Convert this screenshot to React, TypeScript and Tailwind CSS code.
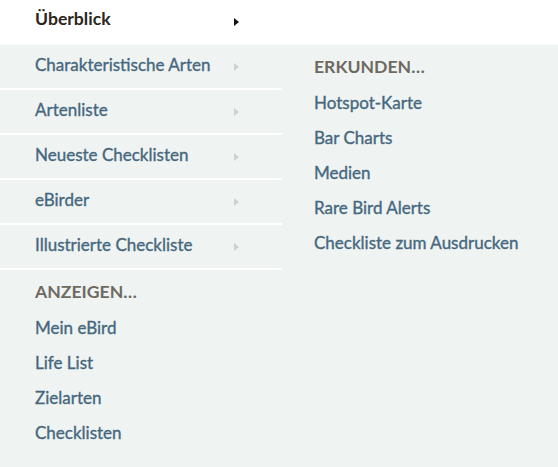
import React from "react";

const rows = [
  "Charakteristische Arten",
  "Artenliste",
  "Neueste Checklisten",
  "eBirder",
  "Illustrierte Checkliste",
];

function Arrow({ dark }: { dark?: boolean }) {
  return (
    <svg width="5" height="8" viewBox="0 0 5 8" className="shrink-0">
      <path d="M0 0 L5 4 L0 8 Z" fill={dark ? "#111111" : "#c9d3d6"} />
    </svg>
  );
}

const link = "text-[#46687e] [-webkit-text-stroke:0.35px_#46687e]";
const head = "h-[35px] flex items-center font-bold text-[17.6px] text-[#6e6a62]";

export default function App() {
  const font = { fontFamily: "Lato, 'Open Sans', sans-serif" };
  return (
    <div className="flex w-[558px] h-[467px] bg-white text-[17px]" style={font}>
      <div className="w-[282px] flex flex-col bg-[#eff3f2]">
        <div className="h-[45px] bg-white flex items-center pl-[35px] pr-[43px] justify-between border-b-2 border-white">
          <span className="font-bold text-[17.6px] text-[#2b2620] -mt-[4px]">Überblick</span>
          <Arrow dark />
        </div>
        {rows.map((r) => (
          <div
            key={r}
            className="h-[45px] flex items-center pl-[35px] pr-[43px] justify-between border-b-2 border-white"
          >
            <span className={`${link} -mt-[4px]`}>{r}</span>
            <Arrow />
          </div>
        ))}
        <div className="flex flex-col pt-[5px] pl-[35px]">
          <div className={head}>ANZEIGEN…</div>
          {["Mein eBird", "Life List", "Zielarten", "Checklisten"].map((t) => (
            <div key={t} className={`h-[35px] flex items-center ${link}`}>
              {t}
            </div>
          ))}
        </div>
      </div>
      <div className="flex-1 flex flex-col">
        <div className="h-[45px] bg-white" />
        <div className="flex-1 bg-[#eff3f2] flex flex-col pt-[5px] pl-[32px]">
          <div className={head}>ERKUNDEN…</div>
          {["Hotspot-Karte", "Bar Charts", "Medien", "Rare Bird Alerts", "Checkliste zum Ausdrucken"].map((t) => (
            <div key={t} className={`h-[35px] flex items-center ${link}`}>
              {t}
            </div>
          ))}
        </div>
      </div>
    </div>
  );
}
